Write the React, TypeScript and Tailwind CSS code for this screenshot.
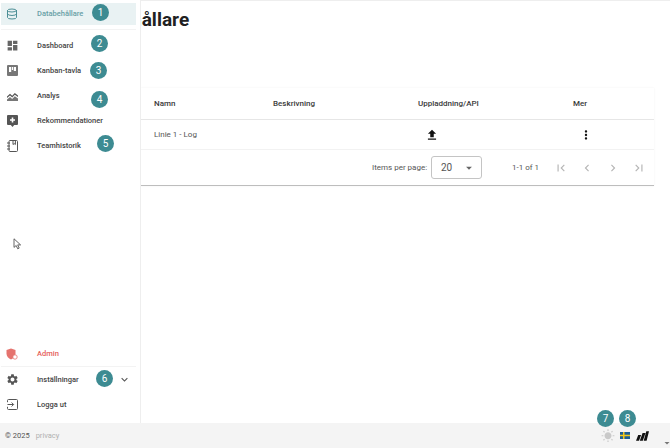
import React from "react";
import {
  MdDashboard,
  MdFileUpload,
  MdMoreVert,
  MdSettings,
  MdExpandMore,
  MdFirstPage,
  MdLastPage,
  MdChevronLeft,
  MdChevronRight,
  MdArrowDropDown,
  MdWbSunny,
} from "react-icons/md";
import { Database } from "lucide-react";

const Badge = ({ n, className }: { n: number; className: string }) => (
  <div
    className={`absolute flex h-[17px] w-[17px] items-center justify-center rounded-full bg-[#3d8b92] text-[10px] text-white ${className}`}
  >
    {n}
  </div>
);

const KanbanIcon = () => (
  <svg width="11" height="11" viewBox="0 0 11 11" className="ml-px">
    <rect width="11" height="11" rx="1" fill="#777" />
    <path d="M2 2h2.200v5H2zM4.900 2h1.200v3H4.900zM6.800 2H9v4H6.800z" fill="#fff" />
  </svg>
);

const AnalysIcon = () => (
  <svg width="11" height="9" viewBox="0 0 11 9" className="ml-px">
    <path d="M0 4.500 3 1.800 5.200 3.800 7.800 1 11 3.500V5L7.800 2.800 5.200 5.600 3 3.500 0 6z" fill="#555" />
    <path d="M0 7.500 3 5 5.200 7 7.800 4.300 11 6.500V9H0z" fill="#777" />
  </svg>
);

const RekIcon = () => (
  <svg width="11" height="12" viewBox="0 0 11 12" className="ml-px">
    <path d="M1 0h9a1 1 0 0 1 1 1v8a1 1 0 0 1-1 1H7.200L5.500 12 3.800 10H1a1 1 0 0 1-1-1V1a1 1 0 0 1 1-1z" fill="#555" />
    <path d="M4.700 2.500h1.600v1.700H8v1.600H6.300v1.700H4.700V5.800H3V4.200h1.700z" fill="#fff" />
  </svg>
);

const TeamIcon = () => (
  <svg width="11" height="12" viewBox="0 0 11 12" fill="none" stroke="#555" strokeWidth="1" className="ml-px">
    <rect x="2" y="0.500" width="8.500" height="11" rx="1" />
    <path d="M0 3h3M0 6h3M0 9h3" />
    <path d="M6 0.500v4l1.200-.9 1.200.9v-4" />
  </svg>
);

const AdminIcon = () => (
  <svg width="12" height="12" viewBox="0 0 12 12">
    <path d="M5 0.500 9.500 2v3.500C9.500 8.500 7.500 10.500 5 11.500 2.500 10.500 0.500 8.500 0.500 5.500V2z" fill="#e5736e" />
    <circle cx="9" cy="9" r="2.200" fill="#fff" stroke="#e5736e" strokeWidth="0.800" />
  </svg>
);

const LogoutIcon = () => (
  <svg width="11" height="11" viewBox="0 0 11 11" fill="none" stroke="#555" strokeWidth="1" className="ml-px">
    <path d="M0.500 3.200V1.500a1 1 0 0 1 1-1h8a1 1 0 0 1 1 1v8a1 1 0 0 1-1 1h-8a1 1 0 0 1-1-1V7.800" />
    <path d="M0.500 5.500h6M4.600 3.500l2 2-2 2" />
  </svg>
);

const CursorIcon = () => (
  <svg width="9" height="12" viewBox="0 0 9 12">
    <path d="M1 0.800v8.600l2.200-1.900 1.500 3.300 1.500-.7-1.500-3.200h2.900z" fill="#fff" stroke="#555" strokeWidth="0.900" />
  </svg>
);

const SwedishFlag = () => (
  <svg width="10" height="7" viewBox="0 0 10 7">
    <rect width="10" height="7" fill="#1b5f96" />
    <path d="M3 0h1.500v7H3zM0 2.700h10v1.500H0z" fill="#f2c91c" />
  </svg>
);

const Logo = () => (
  <svg width="13" height="10" viewBox="0 0 13 10" fill="#111">
    <path d="M0 9.800 2.200 4h2.900L3 9.800zM3.800 9.800 6.600 2h2.900L6.800 9.800zM7.700 9.800 10.300 0.200H13L10.600 9.800z" />
  </svg>
);

type NavItem = { label: string; icon: React.ReactNode; iconClass?: string; textClass?: string };

const NavRow = ({ label, icon, iconClass = "", textClass = "text-[#444]" }: NavItem) => (
  <div className="flex h-[25px] shrink-0 items-center">
    <div className={`flex w-[37px] shrink-0 items-center pl-[6px] ${iconClass}`}>{icon}</div>
    <span className={`text-[7.500px] font-medium ${textClass}`}>{label}</span>
  </div>
);

export default function App() {
  return (
    <div className="relative flex h-[448px] w-[670px] flex-col overflow-hidden bg-white font-[Roboto,sans-serif] text-[#333]">
      <div className="flex min-h-0 flex-1">
        <aside className="flex w-[141px] shrink-0 flex-col border-r border-[#eeeeee] bg-white">
          <div className="mx-px mt-[3px] flex h-[22px] w-[135px] items-center bg-[#e9f2f3]">
            <div className="flex w-[36px] shrink-0 items-center pl-[5px]">
              <Database size={12} color="#4d8f96" strokeWidth={2} />
            </div>
            <span className="text-[7.500px] font-medium text-[#68a0a6]">Databehållare</span>
          </div>
          <div className="mx-px mt-[4px] mb-[3px] h-px w-[135px] bg-[#f3f3f3]" />
          <NavRow label="Dashboard" icon={<MdDashboard size={13} color="#666" />} />
          <NavRow label="Kanban-tavla" icon={<KanbanIcon />} />
          <NavRow label="Analys" icon={<AnalysIcon />} iconClass="pt-[2px]" />
          <NavRow label="Rekommendationer" icon={<RekIcon />} />
          <NavRow label="Teamhistorik" icon={<TeamIcon />} />
          <div className="flex-1" />
          <NavRow label="Admin" icon={<AdminIcon />} textClass="text-[#e5605a]" />
          <div className="mx-px h-px w-[135px] bg-[#f3f3f3]" />
          <div className="relative">
            <NavRow label="Inställningar" icon={<MdSettings size={13} color="#555" />} />
            <MdExpandMore size={13} color="#555" className="absolute top-[6px] left-[118px]" />
          </div>
          <NavRow label="Logga ut" icon={<LogoutIcon />} />
          <div className="h-[6px] shrink-0" />
        </aside>

        <main className="flex min-w-0 flex-1 flex-col overflow-hidden border-t border-[#eeeeee]">
          <h1 className="mt-[7px] -ml-[70px] h-[24px] whitespace-nowrap text-[19px] leading-[24px] font-bold text-[#212121]">
            Databehållare
          </h1>
          <div className="mt-[56px] w-[513px] border-b border-[#bdbdbd] bg-white shadow-[0_0_2px_rgba(0,0,0,0.06)]">
            <div className="flex h-[32px] items-center border-b border-[#e6e6e6] text-[8px] font-medium text-[#3a3a3a]">
              <div className="w-[132px] pl-[13px]">Namn</div>
              <div className="w-[145px]">Beskrivning</div>
              <div className="w-[155px]">Uppladdning/API</div>
              <div>Mer</div>
            </div>
            <div className="flex h-[30px] items-center border-b border-[#f2f2f2] text-[8px] text-[#555]">
              <div className="w-[284px] pl-[13px]">Linie 1 - Log</div>
              <MdFileUpload size={14} color="#111" />
              <MdMoreVert size={14} color="#111" className="ml-[140px]" />
            </div>
            <div className="flex h-[35px] items-center text-[8px] text-[#555]">
              <span className="ml-[231px] w-[55px] whitespace-nowrap">Items per page:</span>
              <div className="ml-[4px] flex h-[23px] w-[51px] items-center justify-between rounded-[3px] border border-[#c4c4c4] pr-[5px] pl-[9px] text-[10px]">
                <span>20</span>
                <MdArrowDropDown size={14} color="#666" />
              </div>
              <span className="ml-[30px] w-[27px] whitespace-nowrap">1-1 of 1</span>
              <div className="ml-[15px] flex items-center gap-[12px] text-[#b5b5b5]">
                <MdFirstPage size={14} />
                <MdChevronLeft size={14} />
                <MdChevronRight size={14} />
                <MdLastPage size={14} />
              </div>
            </div>
          </div>
        </main>
      </div>

      <footer className="flex h-[25px] shrink-0 items-center bg-[#f4f4f4] pl-[5px] text-[7.500px]">
        <span className="text-[#555]">© 2025</span>
        <span className="ml-[6px] text-[#b0b0b0]">privacy</span>
        <div className="ml-auto flex items-center gap-[5px] pr-[21px]">
          <MdWbSunny size={14} color="#c9c9c9" />
          <SwedishFlag />
          <div className="ml-px">
            <Logo />
          </div>
        </div>
      </footer>

      <div className="absolute top-[238px] left-[13px]">
        <CursorIcon />
      </div>
      <MdArrowDropDown size={12} color="#777" className="absolute top-[437px] left-[661px]" />

      <Badge n={1} className="top-[4px] left-[92px]" />
      <Badge n={2} className="top-[35px] left-[91px]" />
      <Badge n={3} className="top-[62px] left-[90px]" />
      <Badge n={4} className="top-[91px] left-[91px]" />
      <Badge n={5} className="top-[135px] left-[97px]" />
      <Badge n={6} className="top-[370px] left-[96px]" />
      <Badge n={7} className="top-[410px] left-[597px]" />
      <Badge n={8} className="top-[410px] left-[619px]" />
    </div>
  );
}
